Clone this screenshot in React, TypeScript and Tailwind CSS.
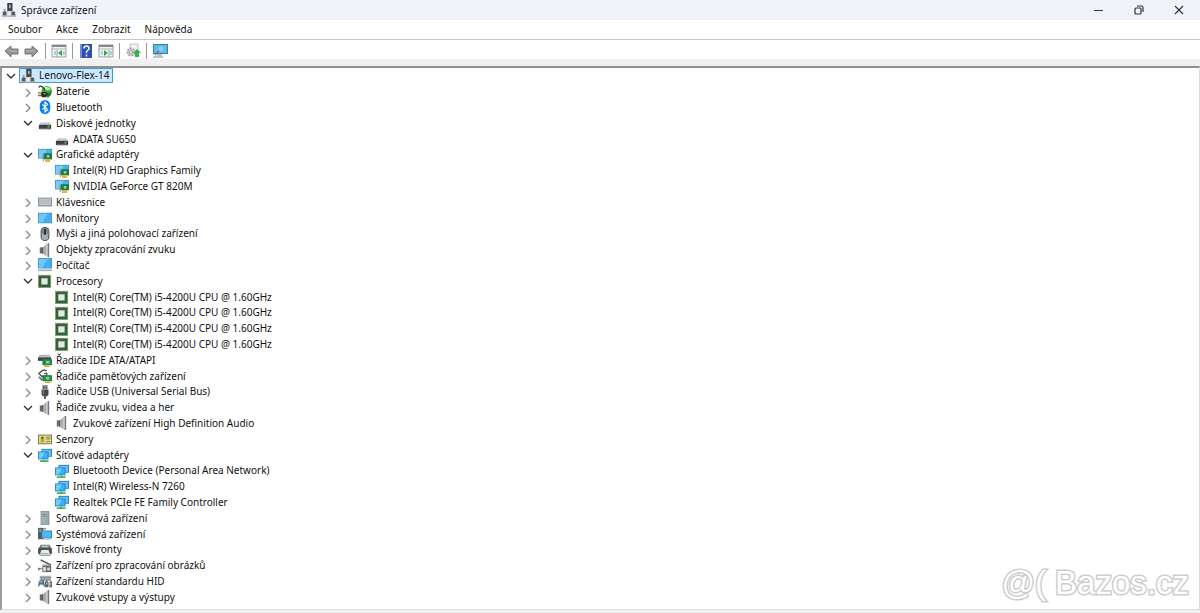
import { useState, type ReactNode } from "react";

type IconName =
  | "root"
  | "battery"
  | "bluetooth"
  | "disk"
  | "display"
  | "keyboard"
  | "monitor"
  | "mouse"
  | "speaker"
  | "computer"
  | "cpu"
  | "ide"
  | "storage"
  | "usb"
  | "sensor"
  | "network"
  | "software"
  | "system"
  | "printer"
  | "imaging"
  | "hid";

const icons: Record<IconName, ReactNode> = {
  root: (
    <>
      <rect x="6" y="0" width="6" height="9" fill="#3c4043" />
      <rect x="8" y="2" width="2" height="4" fill="#aeb4b8" />
      <path d="M1 9h13l2 6H0z" fill="#c3c7ca" />
      <path d="M1 10h4v4H1zM11 10h4v4h-4z" fill="#55595c" />
      <path d="M2 7h2v3H2z" fill="#8f9397" />
      <path d="M6 10h4v5H6z" fill="#eceeef" />
      <path d="M0 15h16" stroke="#96999c" />
    </>
  ),
  battery: (
    <>
      <circle cx="10" cy="7" r="6" fill="#35a83c" />
      <path d="M5 4q5-5 10 1-4 3-10-1" fill="#b4eba0" />
      <path d="M1 3q1-3 4-1 2 2 3 4" fill="none" stroke="#2c3b2c" strokeWidth="1.500" />
      <path d="M4 8h5l3 2-3 4H5l-2-2z" fill="#252e25" />
      <path d="M0 9h4M0 12h4" stroke="#80702b" strokeWidth="1.500" />
      <path d="M10 11l4-3 1 3-4 4z" fill="#1d6f2b" />
      <path d="M6 10h3" stroke="#a8b5a7" />
    </>
  ),
  bluetooth: (
    <>
      <rect x="2" y="0" width="12" height="16" rx="6" fill="#0a80ea" />
      <path d="M5 5l6 6-3 2.500V2.500L11 5l-6 6" fill="none" stroke="#fff" strokeWidth="1.300" />
    </>
  ),
  disk: (
    <>
      <path d="M3 7h10l2 3H1z" fill="#c9cbcc" />
      <rect x="1" y="10" width="14" height="5" rx="1" fill="#393c3e" />
      <path d="M2 14h12" stroke="#7b7e80" />
      <rect x="11" y="11" width="2" height="2" fill="#55cc63" />
    </>
  ),
  display: (
    <>
      <rect x="0" y="1" width="16" height="11" fill="#4492bf" />
      <path d="M1 2h14v9H1z" fill="#49b4f0" />
      <path d="M1 2h9l-5 9H1z" fill="#7accf8" />
      <rect x="7" y="6" width="9" height="7" fill="#237a3f" />
      <rect x="10" y="8" width="3" height="3" fill="#8dccb0" />
      <path d="M8 13h6v3H8z" fill="#edb43c" />
      <path d="M6 6v9" stroke="#6f7c80" />
    </>
  ),
  keyboard: (
    <>
      <rect x="0" y="3" width="16" height="10" fill="#858c91" />
      <path d="M1 4h14v6H1z" fill="#c0c6ca" />
      <path d="M1 6h14M1 8h14" stroke="#a1a8ad" strokeDasharray="1 1" />
      <path d="M1 11h14" stroke="#e4e7e9" />
    </>
  ),
  monitor: (
    <>
      <rect x="0" y="2" width="16" height="12" fill="#4c96c6" />
      <rect x="1" y="3" width="14" height="10" fill="#43aef0" />
      <path d="M1 3h10L5 13H1z" fill="#6ec6fa" />
    </>
  ),
  mouse: (
    <>
      <rect x="3" y="0" width="10" height="16" rx="5" fill="#3c4146" />
      <rect x="4" y="1" width="8" height="14" rx="4" fill="#a7adb3" />
      <path d="M4 5a4 4 0 018 0v3H4z" fill="#7d848b" />
      <rect x="7" y="2" width="2" height="7" rx="1" fill="#22262a" />
    </>
  ),
  speaker: (
    <>
      <path d="M2 5h4v7H2z" fill="#6c7074" />
      <path d="M5 5l5-4v14l-5-3z" fill="#a5a9ac" />
      <path d="M9 1l3-1v16l-3-1z" fill="#c6c9cb" />
      <path d="M12 0v16" stroke="#75797c" strokeWidth="1.500" />
      <path d="M5 5v7" stroke="#44484b" />
    </>
  ),
  computer: (
    <>
      <rect x="0" y="0" width="16" height="12" fill="#4c96c6" />
      <rect x="1" y="1" width="14" height="10" fill="#43aef0" />
      <path d="M1 1h10L5 11H1z" fill="#6ec6fa" />
      <path d="M0 14h16" stroke="#9db5c4" strokeWidth="2" />
    </>
  ),
  cpu: (
    <>
      <rect x="0" y="1" width="15" height="15" fill="#9aa76f" />
      <rect x="1" y="2" width="13" height="13" fill="#2f6240" />
      <rect x="4" y="5" width="7" height="7" fill="#e4e8e4" />
      <path d="M4 12V5h7" fill="none" stroke="#b0bbb1" />
    </>
  ),
  ide: (
    <>
      <path d="M2 2h11l2 3H0z" fill="#b4b9b8" />
      <path d="M0 5h15v4H0z" fill="#3c4543" />
      <rect x="5" y="7" width="11" height="7" fill="#28864a" />
      <rect x="9" y="9" width="4" height="3" fill="#8ccda8" />
      <path d="M7 14h6v2H7z" fill="#e5ae3c" />
    </>
  ),
  storage: (
    <>
      <path d="M10 2L6 1 1 5l4 4 5-2V5H7" fill="none" stroke="#4b4e4e" strokeWidth="1.500" />
      <path d="M1 9l4 4" stroke="#777" strokeWidth="2" />
      <rect x="5" y="7" width="11" height="7" fill="#28864a" />
      <rect x="9" y="9" width="4" height="3" fill="#8ccda8" />
      <path d="M8 14h6v2H8z" fill="#e5ae3c" />
    </>
  ),
  usb: (
    <>
      <rect x="5" y="0" width="6" height="5" fill="#8b8f92" />
      <path d="M6 2h1v2H6zM9 2h1v2H9z" fill="#2d3032" />
      <path d="M4 5h8v6l-2 2H6l-2-2z" fill="#46494c" />
      <path d="M6 6v5" stroke="#94989b" />
      <path d="M8 13v3" stroke="#46494c" strokeWidth="2" />
    </>
  ),
  sensor: (
    <>
      <rect x="0" y="3" width="16" height="11" fill="#6d7442" />
      <rect x="1" y="4" width="14" height="9" fill="#e5dc8c" />
      <path d="M3 5h4v7H3z" fill="#b6a948" />
      <path d="M4 6h2v2H4z" fill="#465c33" />
      <path d="M9 6h5M9 8h5M9 11h5" stroke="#7b8445" />
    </>
  ),
  network: (
    <>
      <rect x="4" y="1" width="12" height="9" fill="#297ebf" />
      <rect x="5" y="2" width="10" height="7" fill="#63bff4" />
      <rect x="0" y="4" width="12" height="9" fill="#297ebf" />
      <path d="M1 5h10v7H1z" fill="#3bb0f5" />
      <path d="M1 5h7l-4 7H1z" fill="#72cbfb" />
      <path d="M2 15h10M7 13v3" stroke="#46b84d" strokeWidth="2" />
    </>
  ),
  software: (
    <>
      <rect x="3" y="0" width="10" height="16" fill="#8c9698" />
      <path d="M4 1h7v14H4z" fill="#a5b0b2" />
      <path d="M5 4h5M5 6h5" stroke="#78888c" />
      <rect x="8" y="11" width="2" height="2" fill="#54c2ac" />
    </>
  ),
  system: (
    <>
      <path d="M0 1h6v13H0z" fill="#505b63" />
      <path d="M1 3h3M1 5h3" stroke="#b3bec5" />
      <path d="M6 1h3v2H6z" fill="#838e94" />
      <rect x="4" y="4" width="12" height="9" fill="#3782b4" />
      <rect x="5" y="5" width="10" height="7" fill="#4db8f5" />
      <path d="M6 14h9" stroke="#a2b5c0" />
    </>
  ),
  printer: (
    <>
      <path d="M3 2h10l2 4H1z" fill="#6e7576" />
      <rect x="0" y="5" width="16" height="8" rx="2" fill="#4d5655" />
      <path d="M4 3h8v2H4z" fill="#c3c9c7" />
      <path d="M4 8h8l2 6H2z" fill="#e9f0ed" />
      <path d="M4 12h8" stroke="#7baa98" />
      <path d="M2 14h12" stroke="#6e7576" />
    </>
  ),
  imaging: (
    <>
      <path d="M3 1l12 6" stroke="#484b4d" strokeWidth="1.500" />
      <path d="M14 7H5M0 11h5" stroke="#85898b" strokeWidth="1.500" />
      <rect x="5" y="8" width="10" height="7" fill="#606467" />
      <path d="M6 9h3v5H6z" fill="#dfe1e2" />
      <circle cx="12" cy="11.500" r="2" fill="#cfd3d5" />
      <path d="M1 10v3" stroke="#484b4d" />
    </>
  ),
  hid: (
    <>
      <rect x="2" y="2" width="13" height="6" fill="#a9afb3" />
      <path d="M3 4h11M3 6h11" stroke="#6e767b" strokeDasharray="1 1" />
      <path d="M0 15l1-7 3-1h3l1 8-3-3H3z" fill="#55738a" />
      <path d="M8 15V9q2-3 4 0v6zM13 15V9q2-2 3 0v6z" fill="#62676b" />
      <path d="M2 9h3" stroke="#9ed2f0" />
      <path d="M10 9v3M14 10v3" stroke="#dadddf" />
    </>
  ),
};

type Item = {
  label: string;
  icon: IconName;
  children?: Item[];
};

const cpu: Item = { label: "Intel(R) Core(TM) i5-4200U CPU @ 1.60GHz", icon: "cpu" };

const categories: Item[] = [
  { label: "Baterie", icon: "battery" },
  { label: "Bluetooth", icon: "bluetooth" },
  {
    label: "Diskové jednotky",
    icon: "disk",
    children: [{ label: "ADATA SU650", icon: "disk" }],
  },
  {
    label: "Grafické adaptéry",
    icon: "display",
    children: [
      { label: "Intel(R) HD Graphics Family", icon: "display" },
      { label: "NVIDIA GeForce GT 820M", icon: "display" },
    ],
  },
  { label: "Klávesnice", icon: "keyboard" },
  { label: "Monitory", icon: "monitor" },
  { label: "Myši a jiná polohovací zařízení", icon: "mouse" },
  { label: "Objekty zpracování zvuku", icon: "speaker" },
  { label: "Počítač", icon: "computer" },
  { label: "Procesory", icon: "cpu", children: [cpu, cpu, cpu, cpu] },
  { label: "Řadiče IDE ATA/ATAPI", icon: "ide" },
  { label: "Řadiče paměťových zařízení", icon: "storage" },
  { label: "Řadiče USB (Universal Serial Bus)", icon: "usb" },
  {
    label: "Řadiče zvuku, videa a her",
    icon: "speaker",
    children: [{ label: "Zvukové zařízení High Definition Audio", icon: "speaker" }],
  },
  { label: "Senzory", icon: "sensor" },
  {
    label: "Síťové adaptéry",
    icon: "network",
    children: [
      { label: "Bluetooth Device (Personal Area Network)", icon: "network" },
      { label: "Intel(R) Wireless-N 7260", icon: "network" },
      { label: "Realtek PCIe FE Family Controller", icon: "network" },
    ],
  },
  { label: "Softwarová zařízení", icon: "software" },
  { label: "Systémová zařízení", icon: "system" },
  { label: "Tiskové fronty", icon: "printer" },
  { label: "Zařízení pro zpracování obrázků", icon: "imaging" },
  { label: "Zařízení standardu HID", icon: "hid" },
  { label: "Zvukové vstupy a výstupy", icon: "speaker" },
];

function Icon({ name }: { name: IconName }) {
  return (
    <svg viewBox="0 0 16 16" className="-my-px size-[14px] shrink-0" aria-hidden="true">
      {icons[name]}
    </svg>
  );
}

function Expander({ open, label, onClick }: { open: boolean; label: string; onClick: () => void }) {
  return (
    <button
      type="button"
      aria-label={label}
      aria-expanded={open}
      onClick={onClick}
      className="flex w-4 shrink-0 justify-center">
      <svg viewBox="0 0 10 10" className="size-[10px]" fill="none" strokeWidth="1.400">
        {open ? (
          <path d="M1 3l4 4 4-4" stroke="#333" />
        ) : (
          <path d="M3 2l4 4-4 4" stroke="#8c8c8c" />
        )}
      </svg>
    </button>
  );
}

const indents = ["pl-px", "pl-[18px]", "pl-[51px]"];

function Row({
  item,
  level,
  open,
  onToggle,
}: {
  item: Item;
  level: number;
  open?: boolean;
  onToggle?: () => void;
}) {
  const selected = level === 0;
  return (
    <li
      role="treeitem"
      aria-level={level + 1}
      aria-selected={selected}
      className={`flex flex-1 items-center ${indents[level]}`}>
      {onToggle && <Expander open={!!open} label={item.label} onClick={onToggle} />}
      <span
        className={`flex items-center gap-1 border pr-[3px] pl-px leading-[13px] whitespace-nowrap ${
          selected ? "border-[#3f9bd0] bg-[#cce8ff]" : "border-transparent"
        }`}>
        <Icon name={item.icon} />
        <span>{item.label}</span>
      </span>
    </li>
  );
}

function DeviceTree() {
  const [rootOpen, setRootOpen] = useState(true);
  const [opened, setOpened] = useState(
    categories.filter((c) => c.children).map((c) => c.label)
  );

  const toggle = (label: string) =>
    setOpened((prev) =>
      prev.includes(label) ? prev.filter((l) => l !== label) : [...prev, label]
    );

  return (
    <ul role="tree" aria-label="Zařízení" className="flex flex-1 flex-col pb-1">
      <Row
        item={{ label: "Lenovo-Flex-14", icon: "root" }}
        level={0}
        open={rootOpen}
        onToggle={() => setRootOpen(!rootOpen)}
      />
      {rootOpen &&
        categories.flatMap((category) => {
          const open = opened.includes(category.label);
          return [
            <Row
              key={category.label}
              item={category}
              level={1}
              open={open}
              onToggle={() => toggle(category.label)}
            />,
            ...(open && category.children ? category.children : []).map((child, index) => (
              <Row key={category.label + index} item={child} level={2} />
            )),
          ];
        })}
    </ul>
  );
}

function Tool({ label, children }: { label: string; children: ReactNode }) {
  return (
    <button type="button" aria-label={label} title={label} className="size-4">
      <svg viewBox="0 0 16 16" className="size-4">
        {children}
      </svg>
    </button>
  );
}

function Separator() {
  return <div className="mx-px h-4 w-px bg-[#9a9a9a]" />;
}

function Toolbar() {
  return (
    <div className="flex h-[19px] items-center gap-1 px-1 pt-[3px]">
      <Tool label="Zpět">
        <path d="M1 8l6-5v3h7v5H7v3z" fill="#969696" stroke="#757575" />
        <path d="M5 8h8" stroke="#b5b5b5" />
      </Tool>
      <Tool label="Vpřed">
        <path d="M14 8L8 3v3H1v5h7v3z" fill="#969696" stroke="#757575" />
        <path d="M2 8h9" stroke="#b5b5b5" />
      </Tool>
      <Separator />
      <Tool label="Zobrazit strom konzoly">
        <rect x="1" y="2" width="14" height="12" fill="#f5f6f7" stroke="#98a0a6" />
        <path d="M1 3h14" stroke="#7f898f" strokeWidth="2" />
        <path d="M1 6h14" stroke="#a5b0b6" />
        <path d="M6 7v7" stroke="#98a0a6" />
        <path d="M3 9h2M3 11h2M12 9h2M12 11h2" stroke="#66a6c8" />
        <path d="M11 7v6l-4-3z" fill="#2fa83a" />
      </Tool>
      <Separator />
      <Tool label="Nápověda">
        <rect x="2" y="1" width="12" height="14" fill="#2c50b8" />
        <path d="M2 1h2v14H2z" fill="#6f8ad8" />
        <path
          d="M6 5.500q0-2.500 2.500-2.500T11 5.500q0 1-1.500 2T8.500 10M8.500 11.500v2"
          fill="none"
          stroke="#fff"
          strokeWidth="1.500"
        />
      </Tool>
      <Tool label="Zobrazit podokno akcí">
        <rect x="1" y="2" width="14" height="12" fill="#f5f6f7" stroke="#98a0a6" />
        <path d="M1 3h14" stroke="#7f898f" strokeWidth="2" />
        <path d="M1 6h14" stroke="#a5b0b6" />
        <path d="M11 7v7" stroke="#98a0a6" />
        <path d="M3 9h2M3 11h2M12 9h2M12 11h2" stroke="#66a6c8" />
        <path d="M6 7v6l4-3z" fill="#2fa83a" />
      </Tool>
      <Separator />
      <Tool label="Vyhledat změny hardwaru">
        <path d="M5 1h8v11H5z" fill="#f3f3f3" stroke="#c2c2c2" />
        <circle cx="6" cy="9" r="3.500" fill="#ddd" stroke="#a8a8a8" strokeWidth="2" strokeDasharray="2 1" />
        <circle cx="6" cy="9" r="1.500" fill="#fff" stroke="#999" />
        <path d="M12 6l4 4h-2v4h-4v-4H8z" fill="#35b345" />
      </Tool>
      <Separator />
      <Tool label="Zařízení">
        <rect x="1" y="1" width="15" height="10" fill="#367fae" />
        <rect x="2" y="2" width="13" height="8" fill="#5bbcf0" />
        <path d="M1 14h10M5 12h5" stroke="#9fb3bf" strokeWidth="1.500" />
        <circle cx="9" cy="6" r="3" fill="#8ad0f5" stroke="#7fb4d0" />
        <path d="M7 8l-4 4" stroke="#5c7888" strokeWidth="1.500" />
      </Tool>
    </div>
  );
}

function TitleBar() {
  return (
    <header className="flex h-5 items-center bg-[#f0f3f9] pl-[2px]">
      <Icon name="root" />
      <h1 className="flex-1 pl-[5px]">Správce zařízení</h1>
      <button type="button" aria-label="Minimalizovat" className="flex w-10 justify-center">
        <svg viewBox="0 0 10 10" className="size-[10px]">
          <path d="M0 5.500h9" stroke="#333" />
        </svg>
      </button>
      <button type="button" aria-label="Obnovit" className="flex w-10 justify-center">
        <svg viewBox="0 0 10 10" className="size-[10px]" fill="none" stroke="#333" strokeWidth="1.200">
          <rect x="1" y="3" width="6" height="6" rx="1" />
          <path d="M3 1h4.500Q9 1 9 2.500V7" />
        </svg>
      </button>
      <button type="button" aria-label="Zavřít" className="mr-px flex w-10 justify-center">
        <svg viewBox="0 0 10 10" className="size-[10px]">
          <path d="M1 1l8 8M9 1L1 9" stroke="#333" strokeWidth="1.200" />
        </svg>
      </button>
    </header>
  );
}

export default function App() {
  return (
    <div className="relative flex min-h-screen flex-col bg-[#f0f0f0] font-['Noto_Sans','Open_Sans',sans-serif] text-[10px] leading-[15px] text-[#111]">
      <TitleBar />
      <div className="bg-white">
        <nav className="flex h-5 items-center gap-[14px] border-b border-[#c4c4c4] px-2">
          {["Soubor", "Akce", "Zobrazit", "Nápověda"].map((name) => (
            <button type="button" key={name}>
              {name}
            </button>
          ))}
        </nav>
        <Toolbar />
      </div>
      <main className="mt-[7px] mb-[3px] flex flex-1 flex-col border-t-2 border-r border-b border-l-2 border-t-[#8e8e8e] border-r-[#dcdcdc] border-b-[#dcdcdc] border-l-[#9b9b9b] bg-white">
        <DeviceTree />
      </main>
      <div className="absolute right-[11px] bottom-[11px] font-['Liberation_Sans',sans-serif] text-[33px] leading-[38px] text-white [-webkit-text-stroke:3px_#cdcdcd] [paint-order:stroke_fill]">
        @( Bazos.cz
      </div>
    </div>
  );
}
